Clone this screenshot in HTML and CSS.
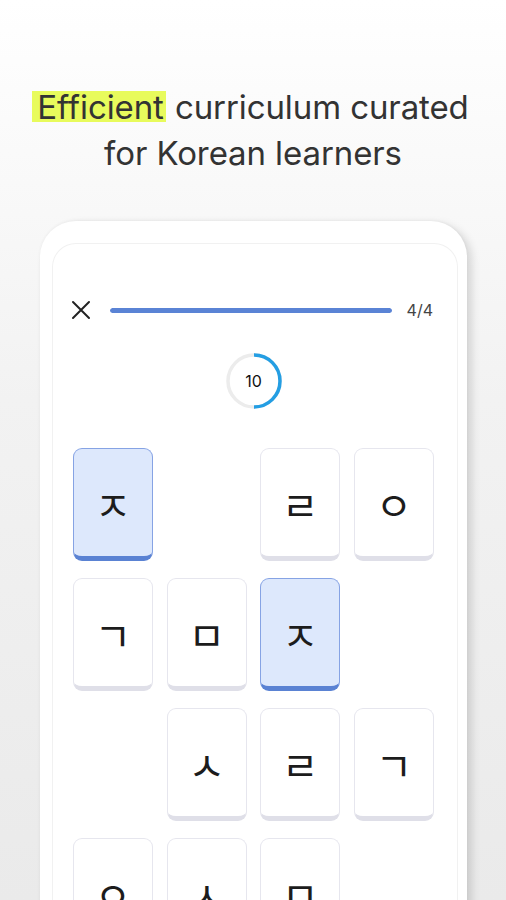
FILE: index.html
```html
<!DOCTYPE html>
<html lang="en">
<head>
<meta charset="utf-8">
<title>Korean curriculum</title>
<link rel="stylesheet" href="styles.css">
</head>
<body>
<div class="page">
  <h1 class="headline"><span class="hl">Efficient</span> curriculum curated<br>for Korean learners</h1>
  <div class="phone">
    <div class="screen">
      <div class="topbar">
        <svg class="close" width="20" height="20" viewBox="0 0 20 20"><path d="M2 2 L18 18 M18 2 L2 18" stroke="#222" stroke-width="2" stroke-linecap="round" fill="none"/></svg>
        <div class="progress"><div class="progress-fill"></div></div>
        <span class="count">4/4</span>
      </div>
      <div class="timer">
        <svg width="58" height="58" viewBox="0 0 58 58">
          <circle cx="29" cy="29" r="26" stroke="#ececec" stroke-width="3.5" fill="none"/>
          <path d="M29 3 A26 26 0 0 1 29 55" stroke="#249ee3" stroke-width="3.5" fill="none"/>
        </svg>
        <span class="timer-num">10</span>
      </div>
      <div class="grid">
        <div class="tile sel">ㅈ</div>
        <div class="gap"></div>
        <div class="tile">ㄹ</div>
        <div class="tile">ㅇ</div>
        <div class="tile">ㄱ</div>
        <div class="tile">ㅁ</div>
        <div class="tile sel">ㅈ</div>
        <div class="gap"></div>
        <div class="gap"></div>
        <div class="tile">ㅅ</div>
        <div class="tile">ㄹ</div>
        <div class="tile">ㄱ</div>
        <div class="tile">ㅇ</div>
        <div class="tile">ㅅ</div>
        <div class="tile">ㅁ</div>
        <div class="gap"></div>
      </div>
    </div>
  </div>
</div>
</body>
</html>
```
FILE: styles.css
```css
html, body {
  margin: 0;
  padding: 0;
  height: 900px;
  overflow: hidden;
}
body {
  background: linear-gradient(180deg, #ffffff 0px, #fbfbfb 120px, #f2f2f2 400px, #eaeaea 900px);
  font-family: Inter, "Noto Sans", sans-serif;
}
.page {
  display: flex;
  flex-direction: column;
  align-items: center;
}
.headline {
  margin: 84px 0 0 0;
  font-size: 33px;
  line-height: 46px;
  font-weight: 400;
  color: #333333;
  text-align: center;
  letter-spacing: -0.1px;
}
.hl {
  display: inline-block;
  line-height: 30px;
  background: #e8fb5c;
  padding: 1px 2px 0 5px;
  margin-left: -5px;
}
.phone {
  margin-top: 45px;
  width: 427px;
  height: 700px;
  margin-left: 1px;
  background: #ffffff;
  border-radius: 36px 36px 0 0;
  box-shadow: 5px 3px 8px rgba(0, 0, 0, 0.13), 0 -1px 3px rgba(0, 0, 0, 0.04);
  padding: 22px 9px 0 12px;
  box-sizing: border-box;
}
.screen {
  height: 100%;
  border: 1px solid #f1f1f1;
  border-bottom: none;
  border-radius: 24px 24px 0 0;
  padding: 46px 24px 0 19px;
  box-sizing: border-box;
}
.topbar {
  display: flex;
  align-items: center;
  height: 40px;
}
.close {
  flex: none;
  margin-left: -1px;
}
.progress {
  flex: 1;
  height: 5px;
  margin: 0 15px 0 19px;
  border-radius: 3px;
  background: #e8eefb;
  overflow: hidden;
}
.progress-fill {
  width: 100%;
  height: 100%;
  background: #5a83d5;
  border-radius: 3px;
}
.count {
  font-size: 16px;
  color: #444;
}
.timer {
  position: relative;
  width: 58px;
  height: 58px;
  margin: 22px auto 0;
  left: 1px;
  display: flex;
  align-items: center;
  justify-content: center;
}
.timer svg {
  position: absolute;
  left: 0;
  top: 0;
}
.timer-num {
  position: relative;
  font-size: 16px;
  color: #111;
}
.grid {
  margin: 38px 0 0 1px;
  display: grid;
  grid-template-columns: repeat(4, 80px);
  column-gap: 13.6px;
  row-gap: 17px;
}
.tile {
  height: 113px;
  box-sizing: border-box;
  border: 1px solid #e6e6ee;
  border-bottom: 5px solid #dfdfe8;
  border-radius: 9px;
  background: #fff;
  display: flex;
  align-items: center;
  justify-content: center;
  font-family: "Noto Sans CJK KR", sans-serif;
  font-size: 40px;
  line-height: 1;
  color: #1c1c1c;
  padding-top: 2px;
}
.tile.sel {
  background: #dde8fc;
  border-color: #86a3e4;
  border-bottom-color: #5a82d3;
}
```
